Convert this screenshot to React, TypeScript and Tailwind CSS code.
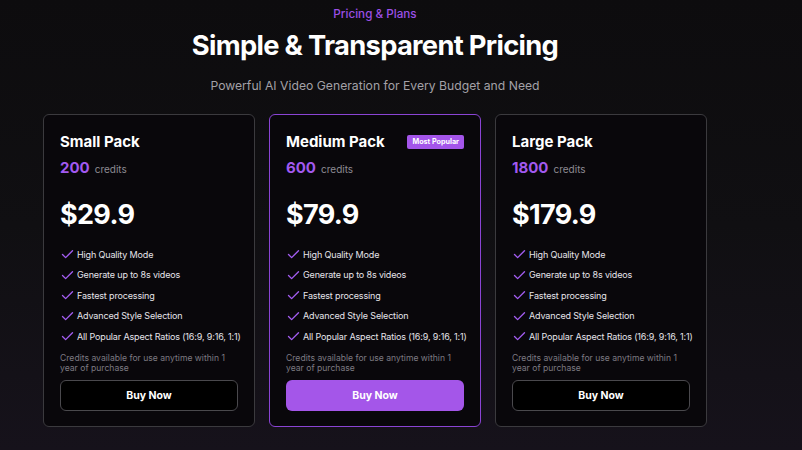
import React from 'react';
import { Check } from 'lucide-react';

type Plan = {
  name: string;
  credits: number;
  price: string;
  popular?: boolean;
};

const plans: Plan[] = [
  { name: 'Small Pack', credits: 200, price: '$29.9' },
  { name: 'Medium Pack', credits: 600, price: '$79.9', popular: true },
  { name: 'Large Pack', credits: 1800, price: '$179.9' },
];

const features = [
  'High Quality Mode',
  'Generate up to 8s videos',
  'Fastest processing',
  'Advanced Style Selection',
  'All Popular Aspect Ratios (16:9, 9:16, 1:1)',
];

const PlanCard: React.FC<{ plan: Plan }> = ({ plan }) => (
  <div
    className={`w-[212px] h-[313px] rounded-md border bg-[#09070b] px-4 pt-[17px] pb-[15px] flex flex-col ${
      plan.popular ? 'border-[#8a44d4]' : 'border-[#3b3a3e]'
    }`}
  >
    <div className="flex items-center justify-between">
      <h3 className="text-[15px] leading-5 font-bold text-white">{plan.name}</h3>
      {plan.popular && (
        <span className="bg-[#a455ea] text-white text-[7.2px] font-bold leading-none px-[5px] py-[3px] rounded-[2px]">
          Most Popular
        </span>
      )}
    </div>
    <div className="mt-[5px] flex items-baseline gap-[5px]">
      <span className="text-[15px] font-bold text-[#a259ef]">{plan.credits}</span>
      <span className="text-[10px] text-[#8e8b93]">credits</span>
    </div>
    <div className="mt-[17px] text-[27px] leading-9 font-bold text-white tracking-tight">{plan.price}</div>
    <ul className="mt-[16px] flex flex-col gap-[8.5px]">
      {features.map((f) => (
        <li key={f} className="flex items-center gap-[2px] text-[9px] tracking-[-0.15px] leading-3 text-[#e6e4ea] whitespace-nowrap">
          <Check size={15} strokeWidth={2.2} className="text-[#a25cf0] shrink-0 -my-[2px]" />
          <span>{f}</span>
        </li>
      ))}
    </ul>
    <p className="mt-[10px] text-[8.6px] leading-[10px] text-[#7d7a82]">
      Credits available for use anytime within 1 year of purchase
    </p>
    <button
      className={`mt-auto shrink-0 h-[31px] w-full rounded-md text-[10.5px] font-bold text-white ${
        plan.popular ? 'bg-[#a456e9]' : 'bg-black border border-[#4a494d]'
      }`}
    >
      Buy Now
    </button>
  </div>
);

export default function App() {
  return (
    <div
      className="w-[802px] h-[450px] overflow-hidden bg-gradient-to-b from-[#0d0c0e] via-[#100f12] to-[#16121b]"
      style={{ fontFamily: 'Inter, "Noto Sans", sans-serif' }}
    >
      <div className="w-[750px] flex flex-col items-center">
        <p className="mt-[6px] text-[11.7px] leading-4 font-medium text-[#9b4fe6]">Pricing &amp; Plans</p>
        <h1 className="mt-[8px] text-[27.3px] leading-8 font-bold text-white tracking-tight">
          Simple &amp; Transparent Pricing
        </h1>
        <p className="mt-[16px] text-[12.2px] leading-4 text-[#a3a1a7]">
          Powerful AI Video Generation for Every Budget and Need
        </p>
        <div className="mt-[20px] flex gap-[14px]">
          {plans.map((p) => (
            <PlanCard key={p.name} plan={p} />
          ))}
        </div>
      </div>
    </div>
  );
}
